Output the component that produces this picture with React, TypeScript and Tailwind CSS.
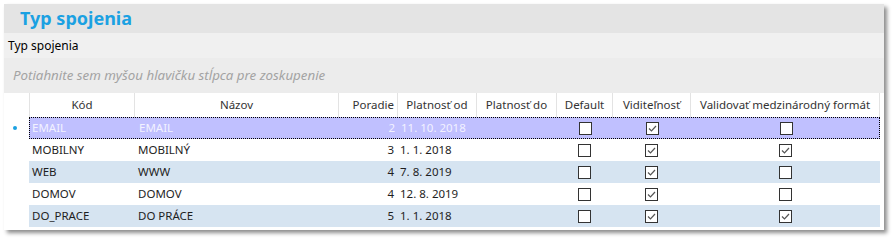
import type { ReactNode } from 'react';

type Row = {
  code: string;
  name: string;
  order: number;
  from: string;
  to: string;
  isDefault: boolean;
  visible: boolean;
  validate: boolean;
};

const ROWS: Row[] = [
  { code: 'EMAIL', name: 'EMAIL', order: 2, from: '11. 10. 2018', to: '', isDefault: false, visible: true, validate: false },
  { code: 'MOBILNY', name: 'MOBILNÝ', order: 3, from: '1. 1. 2018', to: '', isDefault: false, visible: true, validate: true },
  { code: 'WEB', name: 'WWW', order: 4, from: '7. 8. 2019', to: '', isDefault: false, visible: true, validate: false },
  { code: 'DOMOV', name: 'DOMOV', order: 4, from: '12. 8. 2019', to: '', isDefault: false, visible: true, validate: false },
  { code: 'DO_PRACE', name: 'DO PRÁCE', order: 5, from: '1. 1. 2018', to: '', isDefault: false, visible: true, validate: true },
];

const COLS = 'grid grid-cols-[25px_105px_204px_59px_79px_80px_56px_78px_190px]';

function Check({ checked }: { checked: boolean }) {
  return (
    <span className="flex h-[13px] w-[13px] items-center justify-center border border-[#333] bg-white">
      {checked && (
        <svg width="11" height="11" viewBox="0 0 11 11">
          <polyline points="2,5.5 4.5,8 9,3" fill="none" stroke="#555" strokeWidth="1.2" />
        </svg>
      )}
    </span>
  );
}

function Head({ children, align = 'center' }: { children?: ReactNode; align?: 'center' | 'right' }) {
  return (
    <div
      className={`flex items-center border-l border-[#e3e3e3] px-[3px] ${
        align === 'right' ? 'justify-end' : 'justify-center'
      }`}
    >
      {children}
    </div>
  );
}

export default function App() {
  return (
    <div className="h-[240px] w-[894px] bg-white pl-1 pt-1 font-['Segoe_UI','Noto_Sans',sans-serif] text-[11.5px] text-[#1e1e1e]">
      <div className="flex h-[226px] w-[880px] flex-col bg-white shadow-[3px_3px_4px_rgba(0,0,0,0.45)]">
        <div className="flex h-[29px] items-center bg-[#e4e4e4] pl-4 text-[18px] font-bold text-[#1ba1e2]">
          Typ spojenia
        </div>
        <div className="flex h-[25px] items-center bg-[#f0f0f0] pl-1 text-[12px] text-black">Typ spojenia</div>
        <div className="flex h-[35px] items-center bg-[#ececec] pl-[9px] text-[13.3px] italic text-[#a3a3a3]">
          Potiahnite sem myšou hlavičku stĺpca pre zoskupenie
        </div>

        <div className={`${COLS} h-[24px] text-[#333]`}>
          <div />
          <Head>Kód</Head>
          <Head>Názov</Head>
          <Head align="right">Poradie</Head>
          <Head>Platnosť od</Head>
          <Head>Platnosť do</Head>
          <Head>Default</Head>
          <Head>Viditeľnosť</Head>
          <div className="flex items-center justify-center border-x border-[#e3e3e3]">Validovať medzinárodný formát</div>
        </div>

        {ROWS.map((r, i) => {
          const selected = i === 0;
          const bg = selected ? 'bg-[#c0c0ff] text-[#f2f2ff]' : i % 2 === 0 ? 'bg-[#d6e4f1]' : 'bg-white';
          return (
            <div key={r.code} className={`${COLS} h-[22px]`}>
              <div className="flex items-center justify-center bg-white">
                {selected && <span className="ml-[-3px] h-[4px] w-[4px] rounded-full bg-[#1ba1e2]" />}
              </div>
              <div
                className={`col-span-8 grid grid-cols-[105px_204px_59px_79px_80px_56px_78px_190px] ${bg} ${
                  selected ? 'border border-dotted border-black' : ''
                }`}
              >
                <div className={`flex items-center ${selected ? 'pl-[2px]' : 'pl-[3px]'}`}>{r.code}</div>
                <div className="flex items-center pl-[4px]">{r.name}</div>
                <div className="flex items-center justify-end pr-[3px]">{r.order}</div>
                <div className="flex items-center pl-[3px]">{r.from}</div>
                <div className="flex items-center pl-[3px]">{r.to}</div>
                <div className="flex items-center justify-center">
                  <Check checked={r.isDefault} />
                </div>
                <div className="flex items-center justify-center">
                  <Check checked={r.visible} />
                </div>
                <div className="flex items-center justify-center">
                  <Check checked={r.validate} />
                </div>
              </div>
            </div>
          );
        })}
      </div>
    </div>
  );
}
